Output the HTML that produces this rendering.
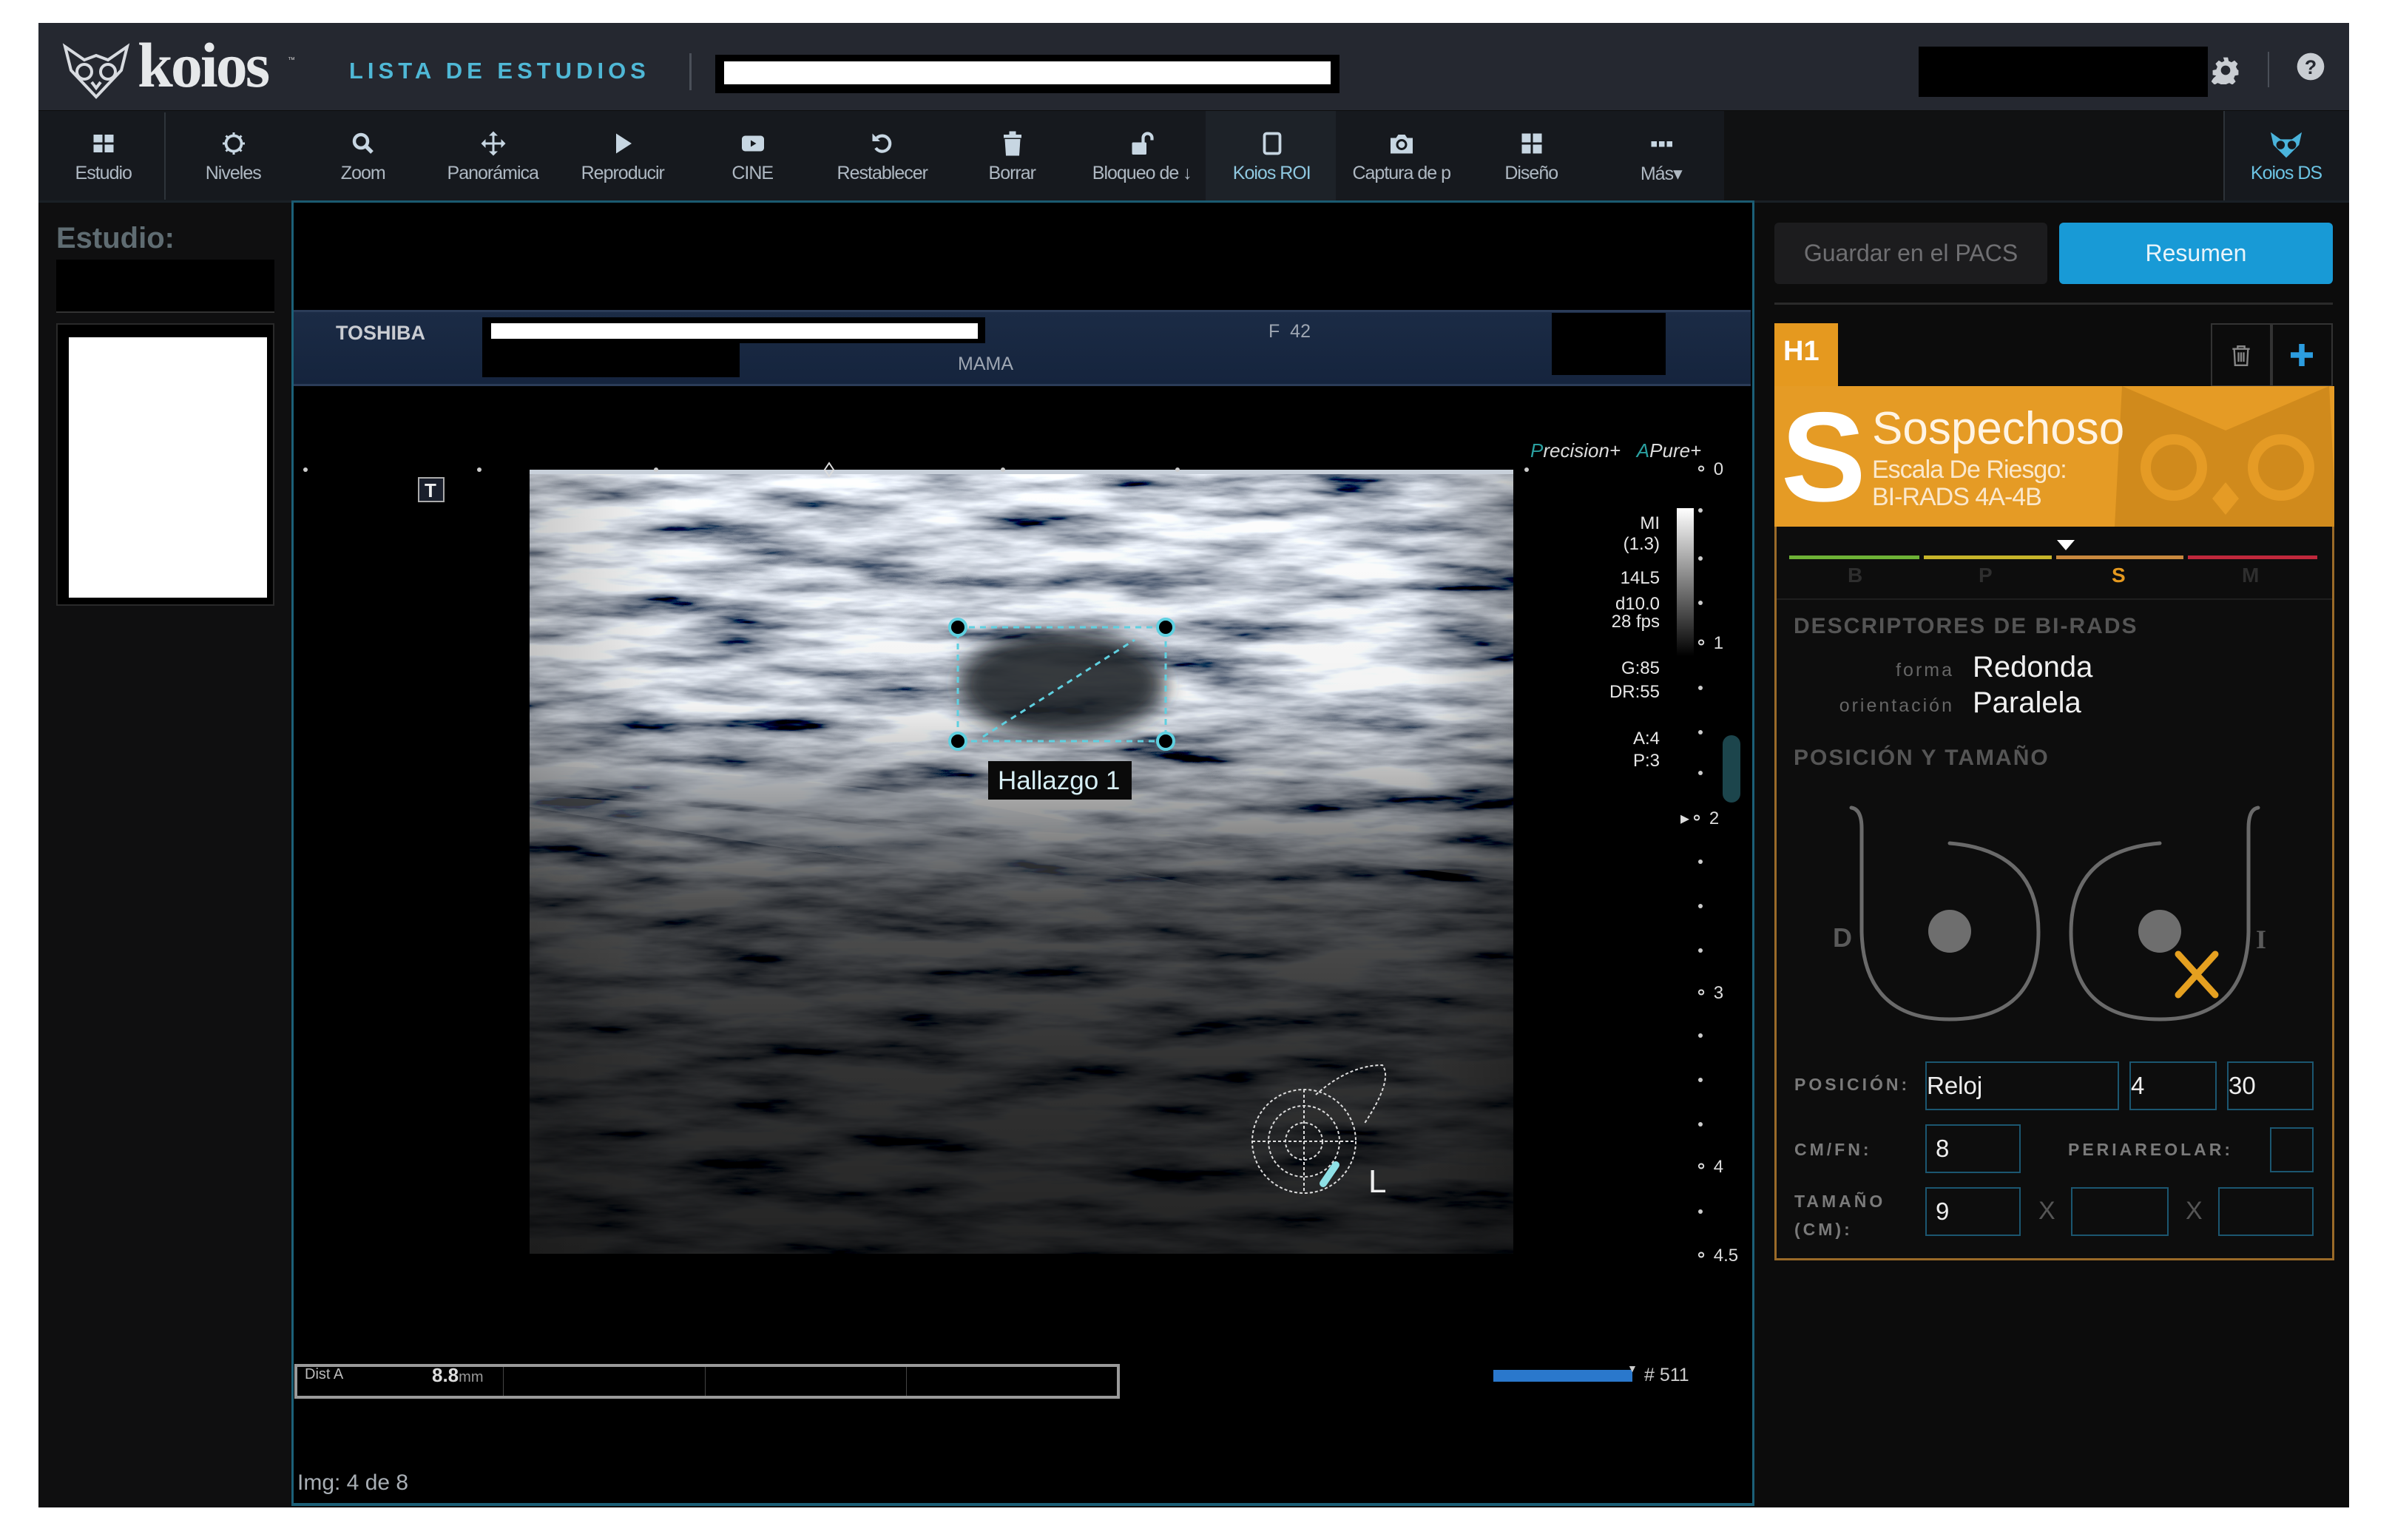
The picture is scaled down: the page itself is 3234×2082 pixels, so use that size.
<!DOCTYPE html>
<html><head><meta charset="utf-8"><style>
*{margin:0;padding:0;box-sizing:border-box}
body{width:3234px;height:2082px;background:#fff;position:relative;overflow:hidden;font-family:"Liberation Sans",sans-serif}
.a{position:absolute}
.tb{position:absolute;top:150px;height:122px;width:175.5px;text-align:center;color:#aeb8c2;font-size:25px;letter-spacing:-1px}
.tb svg{position:absolute;left:70px;top:26px}
.tb span{position:absolute;left:0;right:0;top:70px;white-space:nowrap;overflow:hidden}
.ul{position:absolute;color:#e8e8e8;font-size:24px;text-align:right;width:150px;left:2094px;line-height:28px}
.inp{position:absolute;border:2px solid #1b5670;color:#eee;font-size:33px;padding-left:4px;line-height:62px;height:66px}
.lab{position:absolute;color:#7a7a7a;font-size:23px;font-weight:bold;letter-spacing:4px}
.sc{position:absolute;color:#ddd;font-size:24px}
</style></head><body>
<div class="a" style="left:52px;top:31px;width:3124px;height:2007px;background:#0d0d0d"></div>
<div class="a" style="left:52px;top:31px;width:3124px;height:118px;background:#252830"></div>
<svg class="a" style="left:84px;top:55px" width="92" height="80" viewBox="0 0 92 80"><g fill="none" stroke="#d8dbe0" stroke-width="4"><path d="M4 8 L30 26 L46 20 L62 26 L88 8 L80 40 L46 76 L12 40 Z"/><circle cx="30" cy="42" r="10"/><circle cx="62" cy="42" r="10"/><path d="M40 56 L46 64 L52 56"/></g></svg>
<div class="a" style="left:186px;top:38px;font-family:'Liberation Serif',serif;font-weight:bold;font-size:86px;color:#e6e8ea;letter-spacing:-3px;line-height:100px">koios</div>
<div class="a" style="left:389px;top:76px;font-size:10px;color:#ccc">™</div>
<div class="a" style="left:472px;top:78px;font-size:31px;font-weight:bold;color:#4fb8d6;letter-spacing:6px">LISTA DE ESTUDIOS</div>
<div class="a" style="left:932px;top:72px;width:3px;height:50px;background:#4a4f58"></div>
<div class="a" style="left:967px;top:74px;width:844px;height:52px;background:#000"></div>
<div class="a" style="left:979px;top:83px;width:820px;height:31px;background:#fff"></div>
<div class="a" style="left:2594px;top:63px;width:391px;height:68px;background:#000"></div>
<svg class="a" style="left:2990px;top:76px" width="38" height="38" viewBox="0 0 24 24"><path fill="#c9cdd2" d="M10 1h4l.6 3 2.4 1.2 2.6-1.6 2.8 2.8-1.6 2.6L22 11.4l1 .6v4l-3 .6-1 2.4 1.6 2.6-2.8 2.8-2.6-1.6-2.4 1-.6 3h-4l-.6-3-2.4-1-2.6 1.6-2.8-2.8 1.6-2.6L4 16.6 1 16v-4l3-.6 1-2.4L3.4 6.4l2.8-2.8L8.8 5.2 11 4zM12 8a4 4 0 100 8 4 4 0 000-8z"/></svg>
<div class="a" style="left:3066px;top:70px;width:2px;height:48px;background:#4a4f58"></div>
<svg class="a" style="left:3104px;top:70px" width="40" height="40" viewBox="0 0 24 24"><circle cx="12" cy="12" r="11" fill="#c9cdd2"/><text x="12" y="18" font-size="16" font-weight="bold" text-anchor="middle" fill="#252830" font-family="Liberation Sans">?</text></svg>
<div class="a" style="left:52px;top:150px;width:2279px;height:122px;background:#16191e"></div>
<div class="a" style="left:2331px;top:150px;width:675px;height:122px;background:#101112"></div>
<div class="a" style="left:3006px;top:150px;width:170px;height:122px;background:#16191e;border-left:2px solid #2c3238"></div>
<div class="a" style="left:1630px;top:150px;width:176px;height:122px;background:#1d2228"></div>
<div class="a" style="left:222px;top:152px;width:2px;height:118px;background:#2e343a"></div>
<div class="a" style="left:52px;top:271px;width:3124px;height:3px;background:#1a2026"></div>
<div class="a" style="left:394px;top:271px;width:1978px;height:3px;background:#1b5a70"></div>

<div class="tb" style="left:52px"><svg width="36" height="36" viewBox="0 0 24 24" fill="#c7d6e2"><rect x="3" y="4" width="8" height="7"/><rect x="13" y="4" width="8" height="7"/><rect x="3" y="13" width="8" height="7"/><rect x="13" y="13" width="8" height="7"/></svg><span>Estudio</span></div>
<div class="tb" style="left:227.5px"><svg width="36" height="36" viewBox="0 0 24 24"><circle cx="12" cy="12" r="7" fill="none" stroke="#c7d6e2" stroke-width="2.5"/><g stroke="#c7d6e2" stroke-width="2"><path d="M12 2v3M12 19v3M2 12h3M19 12h3M5 5l2 2M17 17l2 2M5 19l2-2M17 7l2-2"/></g></svg><span>Niveles</span></div>
<div class="tb" style="left:403px"><svg width="36" height="36" viewBox="0 0 24 24"><circle cx="10" cy="10" r="6" fill="none" stroke="#c7d6e2" stroke-width="3"/><path d="M14 14l6 6" stroke="#c7d6e2" stroke-width="3.5"/></svg><span>Zoom</span></div>
<div class="tb" style="left:578.5px"><svg width="36" height="36" viewBox="0 0 24 24" fill="#c7d6e2"><path d="M12 1l4 4h-3v6h6V8l4 4-4 4v-3h-6v6h3l-4 4-4-4h3v-6H5v3l-4-4 4-4v3h6V5H8z"/></svg><span>Panorámica</span></div>
<div class="tb" style="left:754px"><svg width="36" height="36" viewBox="0 0 24 24"><path d="M6 3l14 9-14 9z" fill="#c7d6e2"/></svg><span>Reproducir</span></div>
<div class="tb" style="left:929.5px"><svg width="36" height="36" viewBox="0 0 24 24"><rect x="2" y="5" width="20" height="14" rx="3" fill="#c7d6e2"/><path d="M10 9l5 3-5 3z" fill="#16191e"/></svg><span>CINE</span></div>
<div class="tb" style="left:1105px"><svg width="36" height="36" viewBox="0 0 24 24"><path d="M7 7a7 7 0 1 1-1 9" fill="none" stroke="#c7d6e2" stroke-width="2.8"/><path d="M3 3v7h7z" fill="#c7d6e2"/></svg><span>Restablecer</span></div>
<div class="tb" style="left:1280.5px"><svg width="36" height="36" viewBox="0 0 24 24" fill="#c7d6e2"><rect x="4" y="4" width="16" height="3"/><rect x="9" y="1" width="6" height="3"/><path d="M5 8h14l-1 15H6z"/></svg><span>Borrar</span></div>
<div class="tb" style="left:1456px"><svg width="36" height="36" viewBox="0 0 24 24"><rect x="3" y="11" width="13" height="11" rx="1" fill="#c7d6e2"/><path d="M13 11V7a4 4 0 0 1 8 0v2" fill="none" stroke="#c7d6e2" stroke-width="2.8"/></svg><span>Bloqueo de ↓</span></div>
<div class="tb" style="left:1631.5px;color:#8fc8e0"><svg width="36" height="36" viewBox="0 0 24 24"><rect x="5" y="3" width="14" height="18" rx="2" fill="none" stroke="#c7d6e2" stroke-width="2.5"/></svg><span>Koios ROI</span></div>
<div class="tb" style="left:1807px"><svg width="36" height="36" viewBox="0 0 24 24"><path d="M2 7h5l2-3h6l2 3h5v14H2z" fill="#c7d6e2"/><circle cx="12" cy="13" r="4" fill="none" stroke="#16191e" stroke-width="2"/></svg><span>Captura de p</span></div>
<div class="tb" style="left:1982.5px"><svg width="36" height="36" viewBox="0 0 24 24" fill="#c7d6e2"><rect x="3" y="3" width="8" height="8"/><rect x="13" y="3" width="8" height="8"/><rect x="3" y="13" width="8" height="8"/><rect x="13" y="13" width="8" height="8"/></svg><span>Diseño</span></div>
<div class="tb" style="left:2158px"><svg width="36" height="36" viewBox="0 0 24 24" fill="#c7d6e2"><rect x="3" y="10" width="5" height="5"/><rect x="10" y="10" width="5" height="5"/><rect x="17" y="10" width="5" height="5"/></svg><span>Más▾</span></div>
<div class="tb" style="left:3006px;width:170px;color:#6cc4e4"><svg style="left:62px" width="46" height="40" viewBox="0 0 24 20"><path d="M1 1l7 5h8l7-5-2 9-9 9-9-9z" fill="#4ab4dc"/><circle cx="8" cy="10" r="3" fill="#16191e"/><circle cx="16" cy="10" r="3" fill="#16191e"/></svg><span>Koios DS</span></div>

<div class="a" style="left:52px;top:274px;width:341px;height:1764px;background:#0f0f10"></div>
<div class="a" style="left:76px;top:300px;font-size:40px;font-weight:bold;color:#5f6c72">Estudio:</div>
<div class="a" style="left:76px;top:351px;width:295px;height:72px;background:#000;border-bottom:2px solid #333"></div>
<div class="a" style="left:76px;top:437px;width:295px;height:382px;background:#000;border:2px solid #2a2a2a"></div>
<div class="a" style="left:93px;top:456px;width:268px;height:352px;background:#fff"></div>

<div class="a" style="left:394px;top:274px;width:1978px;height:1762px;background:#000;border-left:3px solid #1c6078;border-right:3px solid #1c6078;border-bottom:4px solid #1c6078"></div>
<div class="a" style="left:397px;top:419px;width:1970px;height:103px;background:linear-gradient(#1b2b45,#15243d);border-top:3px solid #2b3c58;border-bottom:3px solid #2b3c58"></div>
<div class="a" style="left:454px;top:435px;font-size:27px;font-weight:bold;color:#c9ccd2">TOSHIBA</div>
<div class="a" style="left:652px;top:429px;width:680px;height:35px;background:#000"></div>
<div class="a" style="left:664px;top:437px;width:658px;height:21px;background:#fff"></div>
<div class="a" style="left:652px;top:464px;width:348px;height:46px;background:#000"></div>
<div class="a" style="left:1295px;top:478px;font-size:25px;color:#9ea6b2">MAMA</div>
<div class="a" style="left:1715px;top:434px;font-size:25px;color:#9ea6b2">F&nbsp;&nbsp;42</div>
<div class="a" style="left:2098px;top:423px;width:154px;height:84px;background:#000"></div>

<svg class="a" style="left:716px;top:635px" width="1330" height="1060" viewBox="0 0 1330 1060">
<defs>
<filter id="us" x="0" y="0" width="100%" height="100%"><feTurbulence type="fractalNoise" baseFrequency="0.005 0.03" numOctaves="5" seed="7"/><feColorMatrix type="matrix" values="2.4 0 0 0 -0.62  2.45 0 0 0 -0.6  2.5 0 0 0 -0.55  0 0 0 0 1"/></filter>
<filter id="bl"><feGaussianBlur stdDeviation="14"/></filter>
<linearGradient id="fade" x1="0" y1="0" x2="0" y2="1"><stop offset="0" stop-color="#000" stop-opacity="0"/><stop offset="0.3" stop-color="#000" stop-opacity="0.05"/><stop offset="0.42" stop-color="#000" stop-opacity="0.35"/><stop offset="0.55" stop-color="#000" stop-opacity="0.68"/><stop offset="0.75" stop-color="#000" stop-opacity="0.8"/><stop offset="1" stop-color="#000" stop-opacity="0.86"/></linearGradient>
<linearGradient id="side" x1="0" y1="0" x2="1" y2="0"><stop offset="0" stop-color="#000" stop-opacity="0.2"/><stop offset="0.15" stop-color="#000" stop-opacity="0"/><stop offset="0.9" stop-color="#000" stop-opacity="0"/><stop offset="1" stop-color="#000" stop-opacity="0.25"/></linearGradient>
</defs>
<rect width="1330" height="1060" fill="#7c8594"/>
<rect width="1330" height="1060" filter="url(#us)"/>
<g opacity="0.45" fill="#e3eaf3"><path d="M0 400 Q400 410 700 470 T1330 540 L1330 556 Q900 500 700 490 T0 420Z"/><path d="M0 440 Q500 470 800 540 T1330 600 L1330 612 Q900 570 700 555 T0 456Z"/></g>
<rect width="1330" height="1060" fill="url(#fade)"/>
<rect width="1330" height="1060" fill="url(#side)"/>
<ellipse cx="720" cy="290" rx="140" ry="72" fill="#22262c" opacity="0.9" filter="url(#bl)"/>
<rect x="0" y="0" width="1330" height="6" fill="#c8d0da"/>
</svg>
<svg class="a" style="left:394px;top:600px" width="1978" height="1100">
<g stroke="#5fd0e0" stroke-width="3" stroke-dasharray="8 7" fill="none"><rect x="901" y="248" width="281" height="154"/><path d="M935 396 L1140 265"/></g>
<g fill="#000" stroke="#5fd0e0" stroke-width="4"><circle cx="901" cy="248" r="11"/><circle cx="1182" cy="248" r="11"/><circle cx="901" cy="402" r="11"/><circle cx="1182" cy="402" r="11"/></g>
<rect x="942" y="429" width="194" height="52" fill="#0a0a0a"/>
<text x="955" y="467" font-size="35" fill="#d6eef4" font-family="Liberation Sans">Hallazgo 1</text>
<g fill="#ccc"><circle cx="19" cy="35" r="3"/><circle cx="254" cy="35" r="3"/><circle cx="493" cy="35" r="3"/><circle cx="962" cy="35" r="3"/><circle cx="1198" cy="35" r="3"/><circle cx="1670" cy="35" r="3"/></g>
<path d="M727 26l6 9-6 9-6-9z" fill="none" stroke="#ddd" stroke-width="2"/>
<rect x="172" y="46" width="34" height="32" fill="#1a1f2c" stroke="#aaa" stroke-width="2"/><text x="180" y="72" font-size="26" font-weight="bold" fill="#eee" font-family="Liberation Sans">T</text>
<g fill="none" stroke="#ddd" stroke-width="2" stroke-dasharray="4 3"><circle cx="1369" cy="943" r="70"/><circle cx="1369" cy="943" r="48"/><circle cx="1369" cy="943" r="25"/><path d="M1299 943h140M1369 873v140M1385 880 Q1430 840 1475 840 Q1490 860 1450 920"/></g>
<path d="M1395 1000 L1412 975" stroke="#8ee0e6" stroke-width="10" stroke-linecap="round"/>
<text x="1456" y="1012" font-size="44" fill="#eee" font-family="Liberation Sans">L</text>
</svg>
<div class="a" style="left:2069px;top:594px;font-size:26px;font-style:italic;color:#ddd"><span style="color:#2aa0a0">P</span>recision+&nbsp;&nbsp;&nbsp;<span style="color:#2aa0a0">A</span>Pure+</div>
<div class="a" style="left:2267px;top:687px;width:23px;height:200px;background:linear-gradient(#fff,#000)"></div>
<div class="ul" style="top:694px">MI<br>(1.3)</div>
<div class="ul" style="top:768px">14L5</div>
<div class="ul" style="top:805px;line-height:24px">d10.0<br>28 fps</div>
<div class="ul" style="top:888px;line-height:32px">G:85<br>DR:55</div>
<div class="ul" style="top:984px;line-height:30px">A:4<br>P:3</div>
<div class="a" style="left:2329px;top:994px;width:24px;height:91px;border-radius:12px;background:#1c454c"></div>
<div class="sc" style="left:2290px;top:620px">⚬ 0</div>
<div class="sc" style="left:2290px;top:855px">⚬ 1</div>
<div class="sc" style="left:2272px;top:1092px">▸⚬ 2</div>
<div class="sc" style="left:2290px;top:1328px">⚬ 3</div>
<div class="sc" style="left:2290px;top:1563px">⚬ 4</div>
<div class="sc" style="left:2290px;top:1683px">⚬ 4.5</div>
<svg class="a" style="left:2294px;top:640px" width="10" height="1050"><g fill="#ccc"><circle cx="5" cy="50" r="3"/><circle cx="5" cy="115" r="3"/><circle cx="5" cy="175" r="3"/><circle cx="5" cy="290" r="3"/><circle cx="5" cy="350" r="3"/><circle cx="5" cy="405" r="3"/><circle cx="5" cy="525" r="3"/><circle cx="5" cy="585" r="3"/><circle cx="5" cy="645" r="3"/><circle cx="5" cy="760" r="3"/><circle cx="5" cy="820" r="3"/><circle cx="5" cy="880" r="3"/><circle cx="5" cy="998" r="3"/></g></svg>
<div class="a" style="left:398px;top:1844px;width:1116px;height:47px;border:4px solid #9a9a9a;background:#000"></div>
<div class="a" style="left:680px;top:1848px;width:1px;height:39px;background:#444"></div>
<div class="a" style="left:953px;top:1848px;width:1px;height:39px;background:#444"></div>
<div class="a" style="left:1225px;top:1848px;width:1px;height:39px;background:#444"></div>
<div class="a" style="left:412px;top:1847px;font-size:20px;color:#bbb">Dist A</div>
<div class="a" style="left:584px;top:1844px;font-size:26px;color:#ddd"><b>8.8</b><span style="font-size:20px;color:#999">mm</span></div>
<div class="a" style="left:2019px;top:1852px;width:188px;height:16px;background:#2a78cc"></div>
<div class="a" style="left:2200px;top:1842px;font-size:14px;color:#ccc">▼</div>
<div class="a" style="left:2223px;top:1845px;font-size:25px;color:#ccc"># 511</div>
<div class="a" style="left:402px;top:1988px;font-size:30px;color:#a8aeb4">Img: 4 de 8</div>

<div class="a" style="left:2375px;top:274px;width:801px;height:1764px;background:#0c0c0c"></div>
<div class="a" style="left:2399px;top:301px;width:369px;height:83px;background:#1c1c1e;border-radius:6px;color:#6f6f72;font-size:32px;text-align:center;line-height:83px">Guardar en el PACS</div>
<div class="a" style="left:2784px;top:301px;width:370px;height:83px;background:#189ad6;border-radius:6px;color:#e8f4fa;font-size:32px;text-align:center;line-height:83px">Resumen</div>
<div class="a" style="left:2399px;top:409px;width:755px;height:3px;background:#2a2a2a"></div>
<div class="a" style="left:2399px;top:522px;width:757px;height:1182px;border:3px solid #9a6a28;border-top:none;background:#0d0d0d"></div>
<div class="a" style="left:2399px;top:437px;width:86px;height:86px;background:#e5991f;color:#fff;font-size:38px;font-weight:bold;padding:17px 0 0 12px">H1</div>
<div class="a" style="left:2989px;top:437px;width:82px;height:86px;border:2px solid #333"></div>
<div class="a" style="left:3071px;top:437px;width:83px;height:86px;border:2px solid #333"></div>
<svg class="a" style="left:3016px;top:465px" width="28" height="32" viewBox="0 0 24 26" fill="none" stroke="#888" stroke-width="2"><path d="M2 5h20M8 5V2h8v3M4 5l1 19h14l1-19M9 9v11M12 9v11M15 9v11"/></svg>
<svg class="a" style="left:3094px;top:462px" width="36" height="36" viewBox="0 0 24 24"><path d="M12 2v20M2 12h20" stroke="#2c9de0" stroke-width="5"/></svg>
<div class="a" style="left:2399px;top:522px;width:757px;height:190px;background:#e59b25;overflow:hidden">
<svg class="a" style="left:460px;top:0" width="300" height="190" viewBox="0 0 300 190"><g fill="#d08a1c"><path d="M10 0 L150 60 L290 0 L300 190 L0 190Z"/></g><g fill="none" stroke="#e59b25" stroke-width="14"><circle cx="80" cy="110" r="38"/><circle cx="225" cy="110" r="38"/></g><path d="M150 130l18 22-18 22-18-22z" fill="#e59b25"/></svg>
</div>
<div class="a" style="left:2408px;top:528px;font-size:172px;font-weight:bold;color:#fff;line-height:180px">S</div>
<div class="a" style="left:2531px;top:544px;font-size:62px;color:#fff4e4">Sospechoso</div>
<div class="a" style="left:2531px;top:617px;font-size:34px;color:#fbe8cc;letter-spacing:-1px;line-height:37px">Escala De Riesgo:<br>BI-RADS 4A-4B</div>
<div class="a" style="left:2419px;top:751px;width:176px;height:5px;background:#6eb236"></div>
<div class="a" style="left:2601px;top:751px;width:173px;height:5px;background:#c7b52a"></div>
<div class="a" style="left:2780px;top:751px;width:172px;height:5px;background:#c9893e"></div>
<div class="a" style="left:2958px;top:751px;width:175px;height:5px;background:#c0283c"></div>
<div class="a" style="left:2781px;top:730px;width:0;height:0;border-left:12px solid transparent;border-right:12px solid transparent;border-top:14px solid #fff"></div>
<div class="a" style="left:2498px;top:762px;font-size:28px;font-weight:bold;color:#2e2e2e">B</div>
<div class="a" style="left:2675px;top:762px;font-size:28px;font-weight:bold;color:#2e2e2e">P</div>
<div class="a" style="left:2855px;top:762px;font-size:28px;font-weight:bold;color:#e5991f">S</div>
<div class="a" style="left:3031px;top:762px;font-size:28px;font-weight:bold;color:#2e2e2e">M</div>
<div class="a" style="left:2402px;top:809px;width:751px;height:2px;background:#1e1e1e"></div>
<div class="a" style="left:2425px;top:830px;font-size:30px;font-weight:bold;color:#555;letter-spacing:2px">DESCRIPTORES DE BI-RADS</div>
<div class="a" style="left:2442px;top:892px;width:200px;text-align:right;font-size:25px;color:#666;letter-spacing:3px">forma</div>
<div class="a" style="left:2667px;top:880px;font-size:40px;color:#f0f0f0">Redonda</div>
<div class="a" style="left:2442px;top:940px;width:200px;text-align:right;font-size:25px;color:#666;letter-spacing:3px">orientación</div>
<div class="a" style="left:2667px;top:928px;font-size:40px;color:#f0f0f0">Paralela</div>
<div class="a" style="left:2425px;top:1008px;font-size:30px;font-weight:bold;color:#555;letter-spacing:2px">POSICIÓN Y TAMAÑO</div>
<svg class="a" style="left:2380px;top:1060px" width="800" height="340" viewBox="0 0 800 340">
<g fill="none" stroke="#6a6a6a" stroke-width="5" stroke-linecap="round">
<path d="M123 32 Q137 34 137 60 L137 200 Q140 318 256 318 Q376 318 376 200 Q376 90 256 80"/>
<path d="M673 32 Q660 34 660 60 L660 200 Q657 318 540 318 Q420 318 420 200 Q420 90 540 80"/>
</g>
<circle cx="256" cy="199" r="29" fill="#6e6e6e"/><circle cx="540" cy="199" r="29" fill="#6e6e6e"/>
<text x="98" y="220" font-size="36" font-weight="bold" fill="#5a5a5a" font-family="Liberation Sans">D</text>
<text x="670" y="222" font-size="36" font-weight="bold" fill="#5a5a5a" font-family="Liberation Serif">I</text>
<path d="M565 230 L615 285 M615 230 L565 285" stroke="#e5a020" stroke-width="9" stroke-linecap="round"/>
</svg>
<div class="lab" style="left:2426px;top:1453px">POSICIÓN:</div>
<div class="inp" style="left:2603px;top:1435px;width:262px;padding-left:0">Reloj</div>
<div class="inp" style="left:2879px;top:1435px;width:118px;padding-left:0">4</div>
<div class="inp" style="left:3011px;top:1435px;width:117px;padding-left:0">30</div>
<div class="lab" style="left:2426px;top:1541px">CM/FN:</div>
<div class="inp" style="left:2603px;top:1520px;width:129px;padding-left:12px">8</div>
<div class="lab" style="left:2796px;top:1541px">PERIAREOLAR:</div>
<div class="inp" style="left:3069px;top:1524px;width:59px;height:61px"></div>
<div class="lab" style="left:2426px;top:1605px;line-height:38px">TAMAÑO<br>(CM):</div>
<div class="inp" style="left:2603px;top:1605px;width:129px;padding-left:12px">9</div>
<div class="a" style="left:2756px;top:1618px;font-size:34px;color:#555">X</div>
<div class="inp" style="left:2800px;top:1605px;width:132px"></div>
<div class="a" style="left:2955px;top:1618px;font-size:34px;color:#555">X</div>
<div class="inp" style="left:2999px;top:1605px;width:129px"></div>
</body></html>
